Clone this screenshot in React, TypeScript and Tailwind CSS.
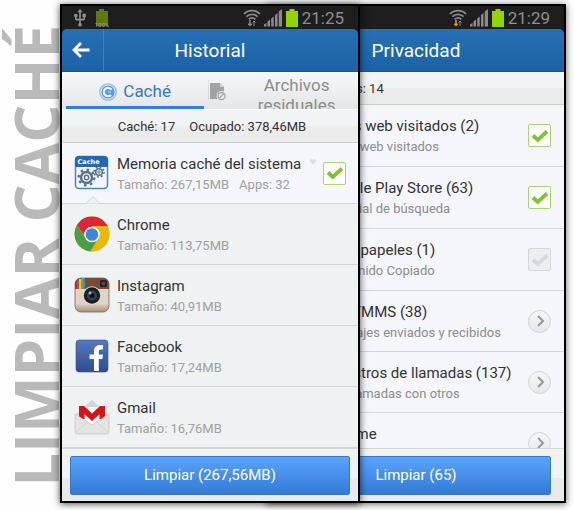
import { useState } from "react";
import type { ReactNode } from "react";
import { MdUsb } from "react-icons/md";

interface CacheApp {
  id: string;
  name: string;
  size: string;
  apps?: number;
  icon: ReactNode;
}

interface PrivacyItem {
  id: string;
  name: string;
  detail: string;
  checked?: boolean;
}

function CacheIcon() {
  return (
    <svg viewBox="0 0 36 36" className="size-9">
      <rect x="1.5" y="1.5" width="32" height="32" rx="3.5" fill="#f4f6f8" stroke="#4a86c5" strokeWidth="1.5" />
      <path d="M1 12V5a4 4 0 0 1 4-4h25a4 4 0 0 1 4 4v7z" fill="#2468b0" />
      <text x="3.5" y="9" fontSize="6.5" fontWeight="700" fill="#fff" fontFamily="DejaVu Sans, sans-serif">
        Cache
      </text>
      <g fill="none" stroke="#56728f">
        <circle cx="12.5" cy="22.5" r="5.5" strokeWidth="2.4" />
        <circle cx="12.5" cy="22.5" r="7.8" strokeWidth="2.4" strokeDasharray="2.6 3.5" />
        <circle cx="12.5" cy="22.5" r="2.2" strokeWidth="1.4" />
        <circle cx="25" cy="17" r="3.3" strokeWidth="1.6" />
        <circle cx="25" cy="17" r="5" strokeWidth="1.6" strokeDasharray="1.9 2" />
        <circle cx="25" cy="17" r="1.2" strokeWidth="1" />
      </g>
    </svg>
  );
}

function ChromeIcon() {
  return (
    <svg viewBox="0 0 36 36" className="size-9">
      <circle cx="18" cy="18" r="17.5" fill="#e9b80a" />
      <path d="M2.8 9.3A17.5 17.5 0 0 1 33.2 9.3L34 11H18a7.5 7.5 0 0 0-7 9z" fill="#e0243a" />
      <path d="M2.8 9.3a17.5 17.5 0 0 0 13.6 26.1L23.5 24a8 8 0 0 1-12-2z" fill="#4b9c46" />
      <path d="M18 10h15.5a17.5 17.5 0 0 1-17.1 25.4L24 23z" fill="#e9b80a" />
      <circle cx="18" cy="18.5" r="7.8" fill="#fff" />
      <circle cx="18" cy="18.5" r="6.3" fill="#3f85d8" />
    </svg>
  );
}

function InstagramIcon() {
  return (
    <svg viewBox="0 0 36 36" className="size-9">
      <defs>
        <linearGradient id="ig-body" x1="0" y1="0" x2="0" y2="1">
          <stop offset="0" stopColor="#e2d5c7" />
          <stop offset=".75" stopColor="#e0d2c3" />
          <stop offset="1" stopColor="#a98f78" />
        </linearGradient>
      </defs>
      <rect x="1" y="1" width="34" height="34" rx="6" fill="url(#ig-body)" stroke="#7c6350" strokeWidth=".8" />
      <path d="M1 12V7a6 6 0 0 1 6-6h22a6 6 0 0 1 6 6v5z" fill="#7a4b36" />
      <path d="M3 12V4l2-2v10z" fill="#d94040" />
      <path d="M5 2h2v10H5z" fill="#efc23a" />
      <path d="M7 1h2v11H7z" fill="#62b04d" />
      <path d="M9 1h2v11H9z" fill="#3f8bc8" />
      <rect x="26" y="3" width="7" height="7" rx="1.5" fill="#232629" />
      <circle cx="29.5" cy="6.5" r="1.8" fill="#3f5560" />
      <circle cx="18" cy="18.5" r="9.3" fill="#dfd8cf" />
      <circle cx="18" cy="18.5" r="8.2" fill="#1b1d20" />
      <circle cx="18" cy="18.5" r="5" fill="#314651" />
      <circle cx="18" cy="18.5" r="2.6" fill="#101418" />
      <circle cx="16" cy="16" r="1.5" fill="#9db9c4" />
    </svg>
  );
}

function FacebookIcon() {
  return (
    <svg viewBox="0 0 36 36" className="size-9">
      <defs>
        <linearGradient id="fb-body" x1="0" y1="0" x2="0" y2="1">
          <stop offset="0" stopColor="#5579bf" />
          <stop offset="1" stopColor="#2d4c8c" />
        </linearGradient>
      </defs>
      <rect x="2" y="2" width="32" height="32" rx="3" fill="url(#fb-body)" stroke="#35528e" strokeWidth=".6" />
      <path
        d="M20 33V21h-4.5v-4.5H20V13c0-4 2.4-6 6-6h3v4.5h-2c-1.7 0-2.2.8-2.2 2.2v2.8H29L28.4 21h-3.6v12z"
        fill="#fff"
      />
    </svg>
  );
}

function GmailIcon() {
  return (
    <svg viewBox="0 0 36 36" className="size-9">
      <path d="M1 16 18 1l17 15z" fill="#d5d5d5" />
      <path d="M5 8h26v18H5z" fill="#fafafa" />
      <path d="M5 20V7h5l8 7.5L26 7h5v13h-5.5v-5L18 22l-7.5-7v5z" fill="#d6131a" />
      <path d="M1 15l17 11 17-11v18a2 2 0 0 1-2 2H3a2 2 0 0 1-2-2z" fill="#e4e4e4" stroke="#c4c4c4" strokeWidth=".7" />
      <path d="M1.5 34 13 23M34.5 34 23 23" stroke="#d2d2d2" fill="none" />
    </svg>
  );
}

const cacheApps: CacheApp[] = [
  { id: "system", name: "Memoria caché del sistema", size: "267,15MB", apps: 32, icon: <CacheIcon /> },
  { id: "chrome", name: "Chrome", size: "113,75MB", icon: <ChromeIcon /> },
  { id: "instagram", name: "Instagram", size: "40,91MB", icon: <InstagramIcon /> },
  { id: "facebook", name: "Facebook", size: "17,24MB", icon: <FacebookIcon /> },
  { id: "gmail", name: "Gmail", size: "16,76MB", icon: <GmailIcon /> },
];

const privacyItems: PrivacyItem[] = [
  { id: "web", name: "Sitios web visitados (2)", detail: "Sitios web visitados", checked: true },
  { id: "play", name: "Google Play Store (63)", detail: "Historial de búsqueda", checked: true },
  { id: "clipboard", name: "Portapapeles (1)", detail: "Contenido Copiado", checked: false },
  { id: "sms", name: "SMS/MMS (38)", detail: "Mensajes enviados y recibidos" },
  { id: "calls", name: "Registros de llamadas (137)", detail: "Sus llamadas con otros" },
  { id: "chrome", name: "Chrome", detail: "Historial, contraseñas y datos" },
];

function StatusBar({ time, usb, download }: { time: string; usb?: boolean; download?: boolean }) {
  return (
    <div className="flex h-[23px] items-center bg-[#1e1e1e] pr-3.5 pl-2 text-[#8f8f8f]">
      {usb && (
        <>
          <MdUsb size={20} />
          <svg viewBox="0 0 16 20" className="ml-1 h-5 w-4">
            <path d="M5 1h5v2h4v15H2V3h3z" fill="#5c7a10" />
            <text x="8" y="18.5" fontSize="6" textAnchor="middle" fill="#a3a3a3" fontFamily="Roboto, sans-serif">
              100%
            </text>
          </svg>
        </>
      )}
      <svg viewBox="0 0 18 18" className="ml-auto size-[18px]" fill="none" stroke="#8b8b8b" strokeWidth="1.8">
        <path d="M1 5a11 11 0 0 1 16 0M3.4 7.7a8 8 0 0 1 11.2 0M5.7 10.3a5 5 0 0 1 6.6 0" />
        <path d="M7 11v5.5M5.3 14.8 7 16.5l1.7-1.7" stroke={download ? "#f0941e" : "#8b8b8b"} strokeWidth="1.5" />
        <path d="M11 17v-5M9.5 13.5 11 12l1.5 1.5" strokeWidth="1" />
      </svg>
      <svg viewBox="0 0 18 18" className="ml-[3px] size-[18px]" fill="#8b8b8b">
        <path d="M0 17.5v-2L2.5 14v3.5zM3.5 17.5v-5l2.5-2v7zM7.2 17.5v-8l2.5-2v10zM11 17.5V6l2.500-2v13.500zM14.7 17.5v-15L18 0v17.5z" />
      </svg>
      <svg viewBox="0 0 12 18" className="mx-1 h-[18px] w-3" fill="#93d500">
        <path d="M3.5 0h5v2H12v16H0V2h3.5z" />
      </svg>
      <span className="text-[17px] leading-5">{time}</span>
    </div>
  );
}

function Header({ title, back }: { title: string; back?: boolean }) {
  return (
    <div className="bg-[#1e1e1e]">
      <header className="relative flex h-[43px] items-center justify-center rounded-t-[5px] border-b border-[#1a5696] bg-linear-to-b from-[#2870b5] to-[#1a61a6]">
        {back && (
          <button
            aria-label="Volver"
            className="absolute inset-y-0 left-0 flex w-[42px] items-center justify-center border-r border-[#3f7fba] pr-1"
          >
            <svg viewBox="0 0 20 20" className="size-5" fill="none" stroke="#fff" strokeWidth="2.8">
              <path d="M18.5 10H3M10 3 3 10l7 7" />
            </svg>
          </button>
        )}
        <h1 className="pt-0.5 text-[19px] text-white">{title}</h1>
      </header>
    </div>
  );
}

function Check({ id, label, initial }: { id: string; label: string; initial: boolean }) {
  const [checked, setChecked] = useState(initial);

  return (
    <label htmlFor={id} aria-label={label} className="relative flex size-[23px] shrink-0 items-center justify-center">
      <input
        id={id}
        type="checkbox"
        checked={checked}
        onChange={() => setChecked(!checked)}
        className="size-full appearance-none rounded-xs border border-[#d4d8da] bg-[#eceff0] checked:border-[#a5d575] checked:bg-white"
      />
      <svg
        viewBox="0 0 18 14"
        className={`pointer-events-none absolute h-3.5 w-[18px] ${checked ? "text-[#7fc42c]" : "text-[#d5d9db]"}`}
      >
        <path d="M2 6.5 6.8 11 16 2.5" fill="none" stroke="currentColor" strokeWidth="3.8" />
      </svg>
    </label>
  );
}

function Footer({ text, className }: { text: string; className: string }) {
  return (
    <div
      className={`h-[53px] border-t border-[#d3d6d8] bg-linear-to-b from-[#f0f3f4] from-55% to-[#e9e9e9] to-55% pt-[7px] ${className}`}
    >
      <button className="h-[39px] w-full rounded-xs border border-[#3b78c2] bg-linear-to-b from-[#5aa3fc] to-[#347ad6] text-[15px] text-white">
        {text}
      </button>
    </div>
  );
}

function Tabs() {
  return (
    <div role="tablist" className="flex h-[38px] overflow-hidden border-b border-white bg-linear-to-b from-[#f7f8f9] to-[#e4e5e6] px-1">
      <button
        role="tab"
        aria-selected="true"
        className="flex w-[48%] items-center justify-center gap-1.5 border-b-3 border-[#2f7fdb] pt-1.5 text-[17px] text-[#3478c2]"
      >
        <svg viewBox="0 0 18 18" className="size-[18px]" fill="none">
          <circle cx="9" cy="9" r="8.2" stroke="#8dbbf2" strokeWidth="1.3" />
          <circle cx="9" cy="9" r="6.6" fill="#5799ef" />
          <path d="M12.6 6.8A4.2 4.2 0 1 0 12 12" stroke="#fff" strokeWidth="2" />
          <path d="M9 9h3" stroke="#bcd8fb" />
        </svg>
        Caché
      </button>
      <button role="tab" aria-selected="false" className="flex flex-1 items-start pl-1 text-[17px] leading-5 text-[#8c8c8c]">
        <svg viewBox="0 0 19 22" className="mt-2 h-[22px] w-[19px] shrink-0">
          <path d="M0 0v20" stroke="#c4c6c7" />
          <path d="M2 3h10l4 4v12H2z" fill="#a0a2a3" />
          <path d="M12 3v4h4z" fill="#d5d5d5" />
          <circle cx="13.5" cy="16" r="5" fill="#eee" />
          <circle cx="13.5" cy="16" r="3.5" fill="none" stroke="#a0a2a3" strokeWidth="1.3" />
          <path d="m11.5 18 4-4" stroke="#a0a2a3" strokeWidth="1.3" />
        </svg>
        <span className="flex-1 pt-[3px] pl-3">
          Archivos
          <br />
          residuales
        </span>
      </button>
    </div>
  );
}

function HistoryPanel() {
  return (
    <section className="z-10 flex min-w-0 flex-1 flex-col border-2 border-black bg-[#f5f6fb] shadow-[0_1px_7px_rgba(0,0,0,0.7)]">
      <StatusBar time="21:25" usb />
      <Header title="Historial" back />
      <Tabs />
      <p className="flex h-[33px] items-center justify-center gap-3.5 border-b border-[#c9cbcc] bg-linear-to-b from-[#f1f4f5] from-50% to-[#ebebeb] to-50% pt-0.5 pl-1 text-[13px] text-[#333]">
        <span>Caché: 17</span>
        <span>Ocupado: 378,46MB</span>
      </p>
      <ul>
        {cacheApps.map((app) => (
          <li
            key={app.id}
            className={`relative flex h-[61px] items-center gap-[7px] border-b border-[#d3d6d8] px-3 ${
              app.apps ? "bg-[#f5f6fb]" : "bg-[#eef2f3]"
            }`}
          >
            {app.icon}
            <div className="min-w-0 flex-1 pt-px whitespace-nowrap">
              <h2 className="text-[15px] leading-[22px] text-[#333]">{app.name}</h2>
              <p className="flex gap-2.5 text-[13px] leading-5 text-[#a0a0a0]">
                <span>Tamaño: {app.size}</span>
                {app.apps && <span>Apps: {app.apps}</span>}
              </p>
            </div>
            {app.apps && (
              <>
                <svg viewBox="0 0 6 6" className="mt-4 size-1.5 self-start" fill="#dcdde1">
                  <path d="M0 2a1.5 1.5 0 0 1 3-.5A1.5 1.5 0 0 1 6 2L3 6z" />
                </svg>
                <Check id={`cache-${app.id}`} label={app.name} initial />
                <svg viewBox="0 0 14 8" className="absolute -bottom-px left-6 h-2 w-3.5">
                  <path d="M0 7.5 7 .5l7 7" fill="#eef2f3" stroke="#d3d6d8" />
                </svg>
              </>
            )}
          </li>
        ))}
      </ul>
      <Footer text="Limpiar (267,56MB)" className="px-2" />
    </section>
  );
}

function PrivacyPanel() {
  return (
    <section className="-ml-[94px] flex min-w-0 flex-1 flex-col border-2 border-black bg-[#f5f6fb] shadow-[0_1px_7px_rgba(0,0,0,0.6)]">
      <StatusBar time="21:29" download />
      <Header title="Privacidad" />
      <p className="flex h-[33px] items-center border-b border-[#c9cbcc] bg-linear-to-b from-[#f1f4f5] from-50% to-[#ebebeb] to-50% pt-0.5 pl-10 text-[13px] text-[#333]">
        Registros: 14
      </p>
      <ul className="h-0 grow overflow-hidden">
        {privacyItems.map((item) => (
          <li
            key={item.id}
            className={`flex items-center border-b border-[#d3d6d8] pr-[13px] pl-14 ${
              item.checked === undefined ? "h-[61px]" : "h-[62px]"
            }`}
          >
            <div className="min-w-0 flex-1 pt-px whitespace-nowrap">
              <h2 className="text-[15px] leading-[22px] text-[#333]">{item.name}</h2>
              <p className="text-[13px] leading-5 text-[#8c8c8c]">{item.detail}</p>
            </div>
            {item.checked === undefined ? (
              <button
                aria-label={item.name}
                className="flex size-[23px] shrink-0 items-center justify-center rounded-full border border-[#d0d2d3] bg-linear-to-b from-[#f4f6f7] to-[#e7e8e9]"
              >
                <svg viewBox="0 0 12 12" className="size-3" fill="none" stroke="#969899" strokeWidth="2">
                  <path d="m4 1 5 5-5 5" />
                </svg>
              </button>
            ) : (
              <Check id={`privacy-${item.id}`} label={item.name} initial={item.checked} />
            )}
          </li>
        ))}
      </ul>
      <Footer text="Limpiar (65)" className="px-[13px]" />
    </section>
  );
}

export default function App() {
  return (
    <main className="flex overflow-hidden bg-[#fefefe] pt-1 pr-[9px] pb-[7px] font-['Roboto',sans-serif]">
      <div className="flex w-[60px] shrink-0 items-end justify-end pb-4">
        <p className="-mr-1.5 shrink-0 rotate-180 font-['Open_Sans',sans-serif] text-[60px] leading-[60px] font-bold whitespace-nowrap text-[#b9b9b9] [writing-mode:vertical-rl]">
          LIMPIAR CACHÉ
        </p>
      </div>
      <HistoryPanel />
      <PrivacyPanel />
    </main>
  );
}
